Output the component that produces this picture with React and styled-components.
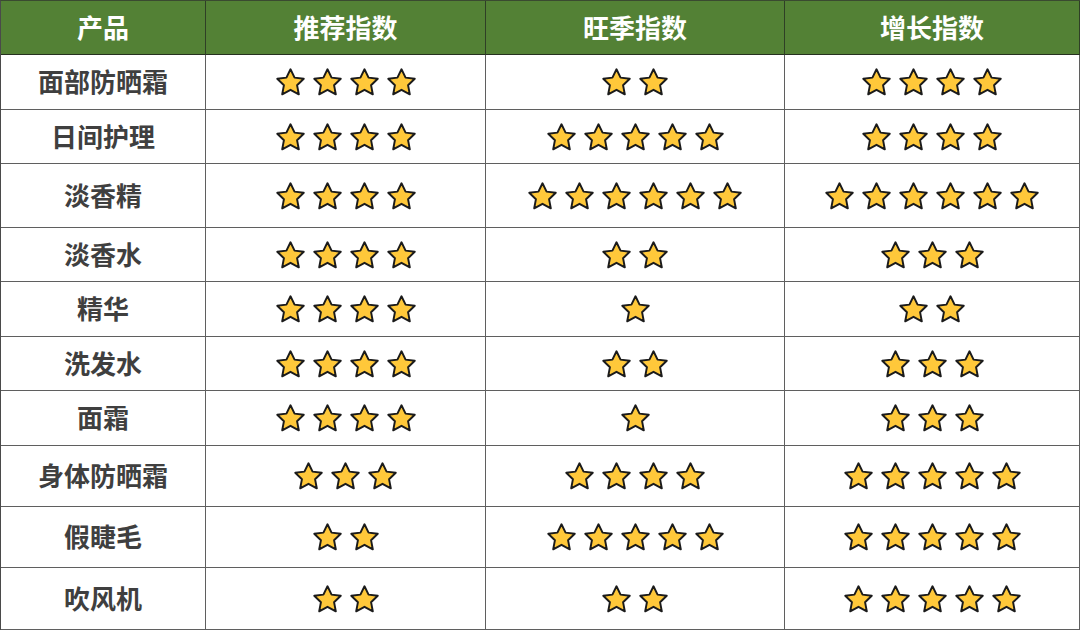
import styled, { createGlobalStyle } from 'styled-components';

const GlobalStyle = createGlobalStyle`
  html, body {
    margin: 0;
    padding: 0;
    background: #ffffff;
  }
  body {
    font-family: "Noto Sans CJK SC", "Noto Sans", sans-serif;
  }
`;

const Table = styled.div`
  width: 1080px;
  display: grid;
  grid-template-columns: 205px 280px 299px 295px;
  border-left: 1px solid #4a4a4a;
  border-top: 1px solid #3a4a30;
  box-sizing: border-box;
`;

const HeadCell = styled.div`
  height: 54px;
  box-sizing: border-box;
  padding-bottom: 3px;
  background: #538135;
  border-right: 1px solid #2f3f26;
  border-bottom: 1px solid #26301f;
  display: flex;
  align-items: center;
  justify-content: center;
  color: #ffffff;
  font-size: 26px;
  font-weight: 700;
`;

const Cell = styled.div`
  height: ${props => props.$h}px;
  box-sizing: border-box;
  border-right: 1px solid #5f5f5f;
  border-bottom: 1px solid #5f5f5f;
  display: flex;
  align-items: center;
  justify-content: center;
  gap: 8px;
`;

const NameCell = styled(Cell)`
  padding-bottom: 3px;
  color: #3f3f3f;
  font-size: 26px;
  font-weight: 700;
`;

const StarIcon = styled.svg`
  width: 29px;
  height: 28px;
  display: block;
`;

const Star = () => (
  <StarIcon viewBox="1.5 1.6 21 20">
    <path
      d="M12 2.4l2.95 6.05 6.65.85-4.85 4.6 1.25 6.6L12 17.25 6 20.5l1.25-6.6L2.4 9.3l6.65-.85z"
      fill="#ffc83a"
      stroke="#1b1b1b"
      strokeWidth="1.4"
      strokeLinejoin="round"
    />
  </StarIcon>
);

const Stars = ({ n }) => Array.from({ length: n }, (_, i) => <Star key={i} />);

const headers = ['产品', '推荐指数', '旺季指数', '增长指数'];

const rows = [
  { name: '面部防晒霜', h: 55, s: [4, 2, 4] },
  { name: '日间护理', h: 54, s: [4, 5, 4] },
  { name: '淡香精', h: 64, s: [4, 6, 6] },
  { name: '淡香水', h: 54, s: [4, 2, 3] },
  { name: '精华', h: 55, s: [4, 1, 2] },
  { name: '洗发水', h: 54, s: [4, 2, 3] },
  { name: '面霜', h: 55, s: [4, 1, 3] },
  { name: '身体防晒霜', h: 61, s: [3, 4, 5] },
  { name: '假睫毛', h: 61, s: [2, 5, 5] },
  { name: '吹风机', h: 62, s: [2, 2, 5] },
];

const App = () => {
  return (
    <>
      <GlobalStyle />
      <Table>
        {headers.map(h => (
          <HeadCell key={h}>{h}</HeadCell>
        ))}
        {rows.map(r => [
          <NameCell key={r.name} $h={r.h}>{r.name}</NameCell>,
          ...r.s.map((n, i) => (
            <Cell key={r.name + i} $h={r.h}>
              <Stars n={n} />
            </Cell>
          )),
        ])}
      </Table>
    </>
  );
};

export default App;
